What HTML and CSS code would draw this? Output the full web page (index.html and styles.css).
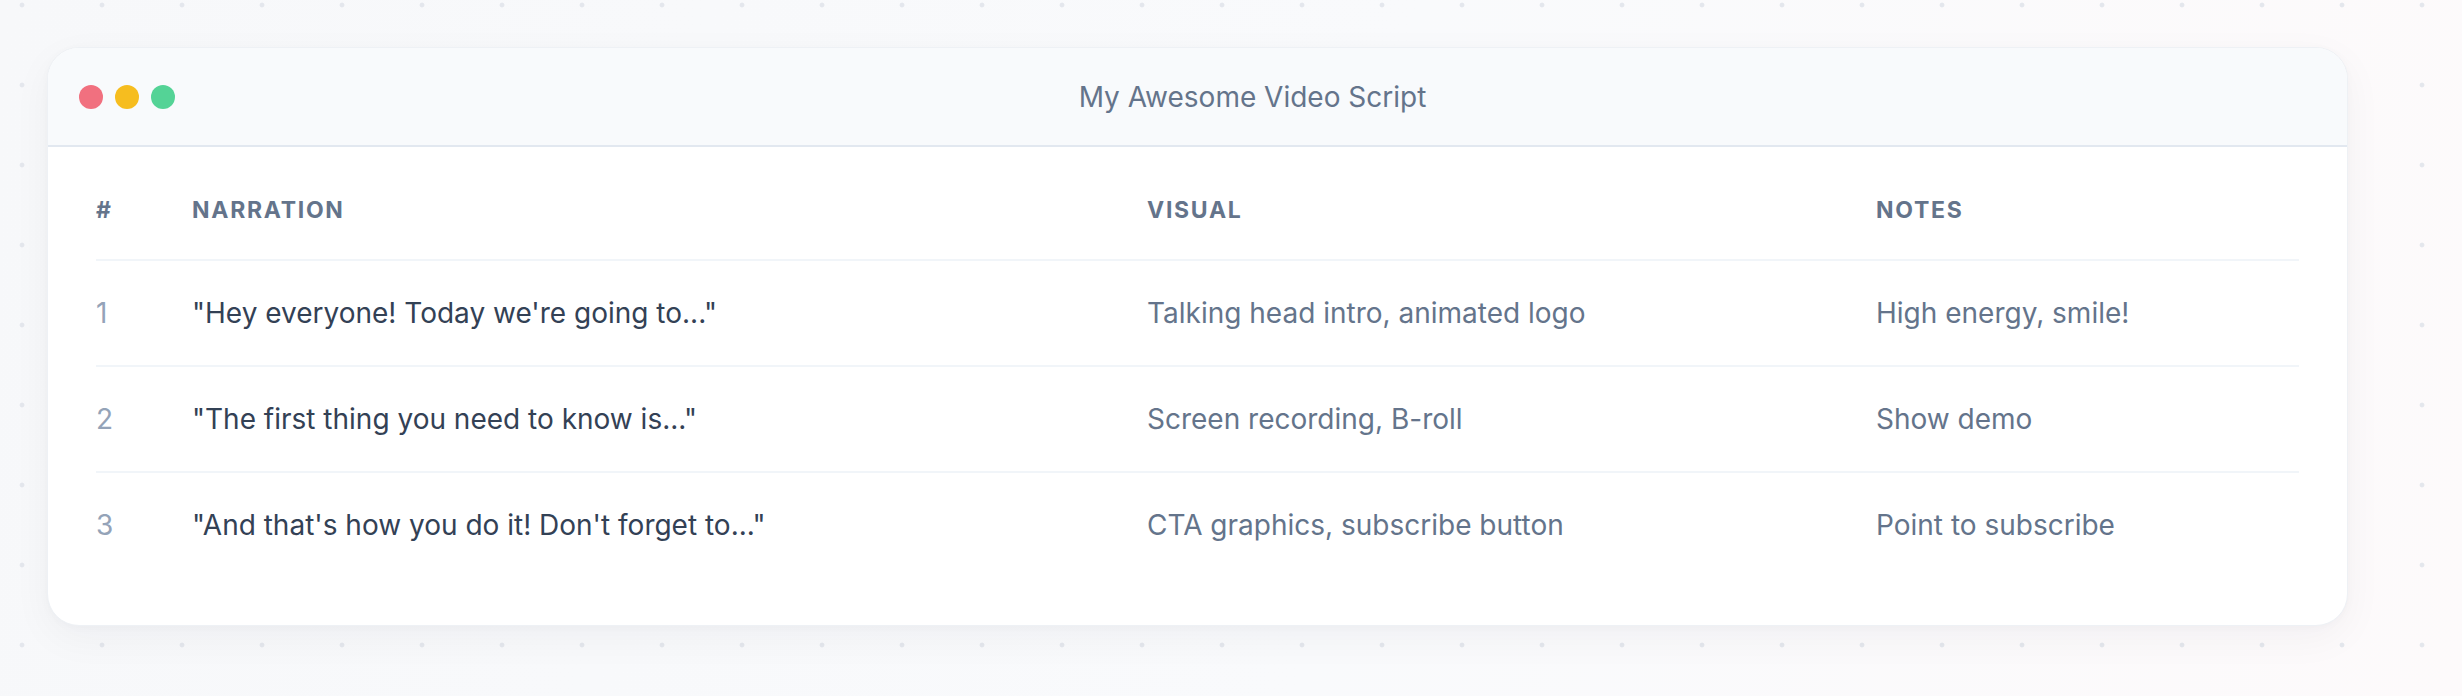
FILE: index.html
```html
<!DOCTYPE html>
<html lang="en">
<head>
<meta charset="utf-8">
<title>My Awesome Video Script</title>
<link rel="stylesheet" href="styles.css">
</head>
<body>
<main class="page">
  <section class="window">
    <header class="window-bar">
      <div class="lights">
        <span class="light light-red"></span>
        <span class="light light-yellow"></span>
        <span class="light light-green"></span>
      </div>
      <h1 class="window-title">My Awesome Video Script</h1>
    </header>
    <div class="window-body">
      <table class="script">
        <colgroup>
          <col class="col-num">
          <col class="col-narration">
          <col class="col-visual">
          <col class="col-notes">
        </colgroup>
        <thead>
          <tr>
            <th>#</th>
            <th>Narration</th>
            <th>Visual</th>
            <th>Notes</th>
          </tr>
        </thead>
        <tbody>
          <tr>
            <td class="num">1</td>
            <td class="narration">"Hey everyone! Today we're going to..."</td>
            <td class="muted">Talking head intro, animated logo</td>
            <td class="muted">High energy, smile!</td>
          </tr>
          <tr>
            <td class="num">2</td>
            <td class="narration">"The first thing you need to know is..."</td>
            <td class="muted">Screen recording, B-roll</td>
            <td class="muted">Show demo</td>
          </tr>
          <tr>
            <td class="num">3</td>
            <td class="narration">"And that's how you do it! Don't forget to..."</td>
            <td class="muted">CTA graphics, subscribe button</td>
            <td class="muted">Point to subscribe</td>
          </tr>
        </tbody>
      </table>
    </div>
  </section>
</main>
</body>
</html>
```

FILE: styles.css
```css
* { box-sizing: border-box; }

html, body {
  margin: 0;
  height: 100%;
}

body {
  font-family: Inter, "Noto Sans", "Liberation Sans", sans-serif;
  background-color: #f8f9fb;
  background-image:
    radial-gradient(circle at 22px 5px, #e4e7ed 0, #e4e7ed 2px, rgba(228,231,237,0) 2.8px),
    linear-gradient(100deg, #f7f8fa 0%, #f9fafc 55%, #fdfafb 100%);
  background-size: 80px 80px, 100% 100%;
  overflow: hidden;
}

.page {
  padding: 47px 0 0 47px;
}

.window {
  width: 2301px;
  background: #ffffff;
  border: 1px solid #eef1f5;
  border-radius: 32px;
  overflow: hidden;
  box-shadow: 0 12px 40px rgba(15, 23, 42, 0.045), 0 2px 8px rgba(15, 23, 42, 0.025);
}

.window-bar {
  display: flex;
  align-items: center;
  height: 99px;
  padding: 0 31px;
  background: #f8fafc;
  border-bottom: 2px solid #e2e8f0;
}

.lights {
  display: flex;
  gap: 12px;
  width: 96px;
  flex: none;
}

.light {
  width: 24px;
  height: 24px;
  border-radius: 50%;
}
.light-red { background: #f1707f; }
.light-yellow { background: #f6bd1f; }
.light-green { background: #54d396; }

.window-title {
  flex: 1;
  margin: 0;
  padding-left: 14px;
  text-align: center;
  font-size: 28px;
  font-weight: 400;
  color: #64748b;
  line-height: 40px;
}

.window-body {
  padding: 48px;
}

.script {
  width: 100%;
  border-collapse: collapse;
  table-layout: fixed;
}

.col-num { width: 96px; }
.col-narration { width: 955px; }
.col-visual { width: 729px; }

.script th {
  text-align: left;
  font-size: 23px;
  font-weight: 700;
  letter-spacing: 0.075em;
  text-transform: uppercase;
  color: #64748b;
  line-height: 31px;
  padding: 0 0 33px 0;
  border-bottom: 2px solid #f1f5f9;
}

.script td {
  font-size: 28px;
  line-height: 42px;
  padding: 31px 0;
  border-bottom: 2px solid #f1f5f9;
  vertical-align: middle;
}

.script tbody tr:last-child td {
  border-bottom: 0;
}

.num { color: #94a3b8; }
.narration { color: #334155; }
.muted { color: #64748b; }
```
